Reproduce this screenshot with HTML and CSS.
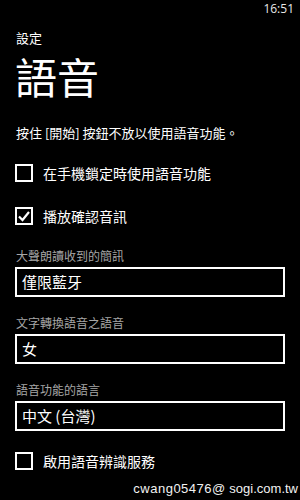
FILE: index.html
```html
<!DOCTYPE html>
<html lang="zh-Hant">
<head>
<meta charset="utf-8">
<link rel="stylesheet" href="styles.css">
</head>
<body>
<div class="screen">
  <div class="status"><span class="time">16:51</span></div>
  <div class="app">設定</div>
  <h1 class="title">語音</h1>
  <p class="hint">按住 [開始] 按鈕不放以使用語音功能。</p>

  <div class="check first">
    <span class="box"></span>
    <span class="check-label">在手機鎖定時使用語音功能</span>
  </div>
  <div class="check">
    <span class="box"><svg viewBox="0 0 14 14" width="14" height="14"><polyline points="2,7.5 5.5,11 12,3" fill="none" stroke="#fff" stroke-width="2.2"/></svg></span>
    <span class="check-label">播放確認音訊</span>
  </div>

  <div class="field">
    <div class="field-label">大聲朗讀收到的簡訊</div>
    <div class="picker">僅限藍牙</div>
  </div>
  <div class="field">
    <div class="field-label">文字轉換語音之語音</div>
    <div class="picker">女</div>
  </div>
  <div class="field">
    <div class="field-label">語音功能的語言</div>
    <div class="picker">中文 (台灣)</div>
  </div>

  <div class="check last">
    <span class="box"></span>
    <span class="check-label">啟用語音辨識服務</span>
  </div>

  <div class="watermark"><span class="wm-user">cwang05476@</span> sogi.com.tw</div>
</div>
</body>
</html>
```
FILE: styles.css
```css
html, body {
  margin: 0;
  padding: 0;
  background: #000;
}
body {
  font-family: "Noto Sans CJK TC", "Noto Sans", sans-serif;
  color: #fff;
}
.screen {
  position: relative;
  width: 300px;
  height: 500px;
  overflow: hidden;
  display: flex;
  flex-direction: column;
  padding: 0 15px 0 16px;
  box-sizing: border-box;
}
.status {
  height: 18px;
  display: flex;
  justify-content: flex-end;
  margin-right: -9px;
}
.time {
  font-family: "Open Sans", "Noto Sans", sans-serif;
  font-size: 12px;
  line-height: 18px;
  color: #e8e8e8;
}
.app {
  margin-top: 12px;
  font-size: 13px;
  line-height: 16px;
}
.title {
  margin: 7px 0 0 -1px;
  font-size: 42px;
  line-height: 46px;
  font-weight: 400;
  letter-spacing: 0;
}
.hint {
  margin: 25px 0 0 0;
  font-size: 13px;
  line-height: 18px;
}
.check {
  display: flex;
  align-items: center;
  gap: 10px;
  height: 26px;
  margin-top: 17px;
  margin-left: -1px;
}
.check.first {
  margin-top: 18px;
}
.check.last {
  margin-top: 17px;
}
.box {
  width: 18px;
  height: 18px;
  border: 2px solid #fff;
  box-sizing: border-box;
  display: flex;
  align-items: center;
  justify-content: center;
  flex-shrink: 0;
}
.check-label {
  font-size: 14px;
  line-height: 20px;
}
.field {
  margin-top: 19px;
  display: flex;
  flex-direction: column;
  gap: 3px;
}
.field + .field {
  margin-top: 18px;
}
.field-label {
  font-size: 12px;
  line-height: 16px;
  color: #a6a6a6;
}
.picker {
  height: 30px;
  border: 2px solid #fff;
  box-sizing: border-box;
  margin-left: -1px;
  padding-left: 5px;
  font-size: 15px;
  line-height: 26px;
}
.watermark {
  position: absolute;
  right: 2px;
  bottom: 3px;
  font-family: "Liberation Sans", Arial, sans-serif;
  font-size: 13px;
  line-height: 16px;
  color: #f2f2f2;
}
.wm-user {
  letter-spacing: 0.5px;
}
```
